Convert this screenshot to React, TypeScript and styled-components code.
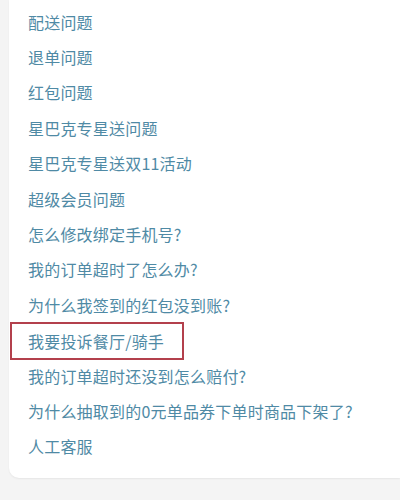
import React from 'react';
import styled, { createGlobalStyle, css } from 'styled-components';

const GlobalStyle = createGlobalStyle`
  html, body {
    margin: 0;
    padding: 0;
    background: #f4f4f4;
  }
  body {
    font-family: "Noto Sans CJK SC", "Noto Sans", sans-serif;
  }
`;

const Page = styled.div`
  width: 400px;
  height: 500px;
  overflow: hidden;
  padding-left: 9px;
  box-sizing: border-box;
`;

const Card = styled.div`
  height: 478px;
  background: #ffffff;
  border-bottom-left-radius: 10px;
  box-shadow: 0 1px 2px rgba(0, 0, 0, 0.06);
  padding: 4px 0 13px;
  box-sizing: border-box;
  display: flex;
  flex-direction: column;
`;

const Item = styled.div<{ $marked?: boolean }>`
  height: 35.4px;
  display: flex;
  align-items: center;
  padding-left: 19px;
  font-size: 16px;
  color: #4f8aa5;
  letter-spacing: 0.2px;
  white-space: nowrap;
  box-sizing: border-box;
  ${(p) =>
    p.$marked &&
    css`
      width: 174px;
      height: 38px;
      margin: -1px 0 -1.6px 1px;
      padding-left: 16px;
      border: 2px solid #b3404c;
    `}
`;

const questions = [
  '配送问题',
  '退单问题',
  '红包问题',
  '星巴克专星送问题',
  '星巴克专星送双11活动',
  '超级会员问题',
  '怎么修改绑定手机号?',
  '我的订单超时了怎么办?',
  '为什么我签到的红包没到账?',
  '我要投诉餐厅/骑手',
  '我的订单超时还没到怎么赔付?',
  '为什么抽取到的0元单品券下单时商品下架了?',
  '人工客服',
];

const App: React.FC = () => (
  <>
    <GlobalStyle />
    <Page>
      <Card>
        {questions.map((q) => (
          <Item key={q} $marked={q === '我要投诉餐厅/骑手'}>
            {q}
          </Item>
        ))}
      </Card>
    </Page>
  </>
);

export default App;
